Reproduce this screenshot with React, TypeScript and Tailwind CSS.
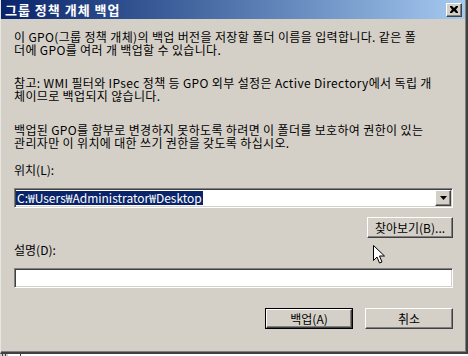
import React from 'react';

const font = { fontFamily: '"Noto Sans CJK KR", "Noto Sans", sans-serif' };

function RaisedButton({ label, isDefault }: { label: string; isDefault?: boolean }) {
  return (
    <div className={isDefault ? 'border border-black' : ''}>
      <div
        className={
          'flex items-center justify-center bg-[#d4d0c8] text-[12px] leading-[13px] text-black ' +
          'border-t border-l border-t-white border-l-white border-b border-r border-b-[#404040] border-r-[#404040] ' +
          'shadow-[inset_-1px_-1px_0_#808080]'
        }
        style={{ height: isDefault ? 19 : 21, width: isDefault ? 86 : 88 }}
      >
        {label}
      </div>
    </div>
  );
}

function Sunken({ children }: { children?: React.ReactNode }) {
  return (
    <div className="border-t border-l border-t-[#808080] border-l-[#808080] border-b border-r border-b-white border-r-white">
      <div className="h-[18px] bg-white shadow-[inset_1px_1px_0_#404040,inset_-1px_-1px_0_#d4d0c8] flex items-center px-[1px]">
        {children}
      </div>
    </div>
  );
}

function Para({ lines, className }: { lines: string[]; className?: string }) {
  return (
    <div className={'flex flex-col tracking-[0.35px] ' + (className ?? '')}>
      {lines.map((l) => (
        <div key={l} className="h-[13px] leading-[13px] whitespace-nowrap">
          {l}
        </div>
      ))}
    </div>
  );
}

export default function App() {
  return (
    <div className="w-[468px] h-[356px] bg-[#d4d0c8] overflow-hidden flex flex-col" style={font}>
      <div className="h-[354px] flex flex-col border-l border-l-[#e8e6e1] border-r-2 border-r-[#404040] border-b-2 border-b-[#404040] shadow-[inset_-1px_-1px_0_#808080]">
        {/* title bar */}
        <div className="h-[19px] mr-[1px] flex items-center justify-between bg-gradient-to-r from-[#0a246a] to-[#a6caf0] pl-[4px] pr-[3px]">
          <span className="text-white font-bold text-[13px] leading-[13px] tracking-[1px]">그룹 정책 개체 백업</span>
          <div className="w-[16px] h-[14px] bg-[#d4d0c8] border-t border-l border-t-white border-l-white border-b border-r border-b-[#404040] border-r-[#404040] shadow-[inset_-1px_-1px_0_#808080] flex items-center justify-center">
            <svg width="8" height="7" viewBox="0 0 8 7">
              <path d="M0 0h2l2 2 2-2h2v1l-2 2.5 2 2.5v1h-2l-2-2-2 2h-2v-1l2-2.5-2-2.5z" fill="black" />
            </svg>
          </div>
        </div>

        <div className="flex flex-col pl-[13px] pr-[13px] text-[12px] leading-[13px] text-black">
          <Para
            className="mt-[11px]"
            lines={[
              '이 GPO(그룹 정책 개체)의 백업 버전을 저장할 폴더 이름을 입력합니다. 같은 폴',
              '더에 GPO를 여러 개 백업할 수 있습니다.',
            ]}
          />
          <Para
            className="mt-[20px]"
            lines={[
              '참고: WMI 필터와 IPsec 정책 등 GPO 외부 설정은 Active Directory에서 독립 개',
              '체이므로 백업되지 않습니다.',
            ]}
          />
          <Para
            className="mt-[21px]"
            lines={[
              '백업된 GPO를 함부로 변경하지 못하도록 하려면 이 폴더를 보호하여 권한이 있는',
              '관리자만 이 위치에 대한 쓰기 권한을 갖도록 하십시오.',
            ]}
          />

          <div className="mt-[14px] h-[13px]">위치(L):</div>
          <div className="mt-[12px]">
            <Sunken>
              <div className="flex-1 flex items-center">
                <span className="bg-[#0a246a] text-white h-[14px] leading-[14px] px-[1px]">C:₩Users₩Administrator₩Desktop</span>
              </div>
              <div className="w-[16px] h-[16px] bg-[#d4d0c8] border-t border-l border-t-white border-l-white border-b border-r border-b-[#404040] border-r-[#404040] shadow-[inset_-1px_-1px_0_#808080] flex items-center justify-center">
                <svg width="7" height="4" viewBox="0 0 7 4">
                  <path d="M0 0h7L3.5 4z" fill="black" />
                </svg>
              </div>
            </Sunken>
          </div>
          <div className="mt-[9px] flex justify-end">
            <div className="w-[86px] h-[21px] flex items-center justify-center bg-[#d4d0c8] border-t border-l border-t-white border-l-white border-b border-r border-b-[#404040] border-r-[#404040] shadow-[inset_-1px_-1px_0_#808080]">
              찾아보기(B)...
            </div>
          </div>

          <div className="mt-[5px] h-[13px] relative">
            설명(D):
            <svg className="absolute left-[359px] top-[2px]" width="13" height="20" viewBox="0 0 13 20">
              <path d="M0.5 0.5v15l3.5-3.5 2.5 6 2.5-1-2.5-6h5z" fill="white" stroke="black" strokeWidth="1" />
            </svg>
          </div>
          <div className="mt-[12px]">
            <Sunken />
          </div>

          <div className="mt-[20px] flex justify-end gap-[12px]">
            <RaisedButton label="백업(A)" isDefault />
            <RaisedButton label="취소" />
          </div>
        </div>
      </div>
      <div className="h-[2px] flex">
        <div className="w-[2px] bg-[#d4d0c8]" />
        <div className="w-[1px] bg-[#404040]" />
        <div className="w-[2px] bg-[#d4d0c8]" />
        <div className="w-[1px] bg-[#404040]" />
        <div className="w-[2px] bg-[#d4d0c8]" />
        <div className="w-[12px] bg-white" />
        <div className="w-[1px] bg-[#404040]" />
        <div className="flex-1 bg-white" />
      </div>
    </div>
  );
}
